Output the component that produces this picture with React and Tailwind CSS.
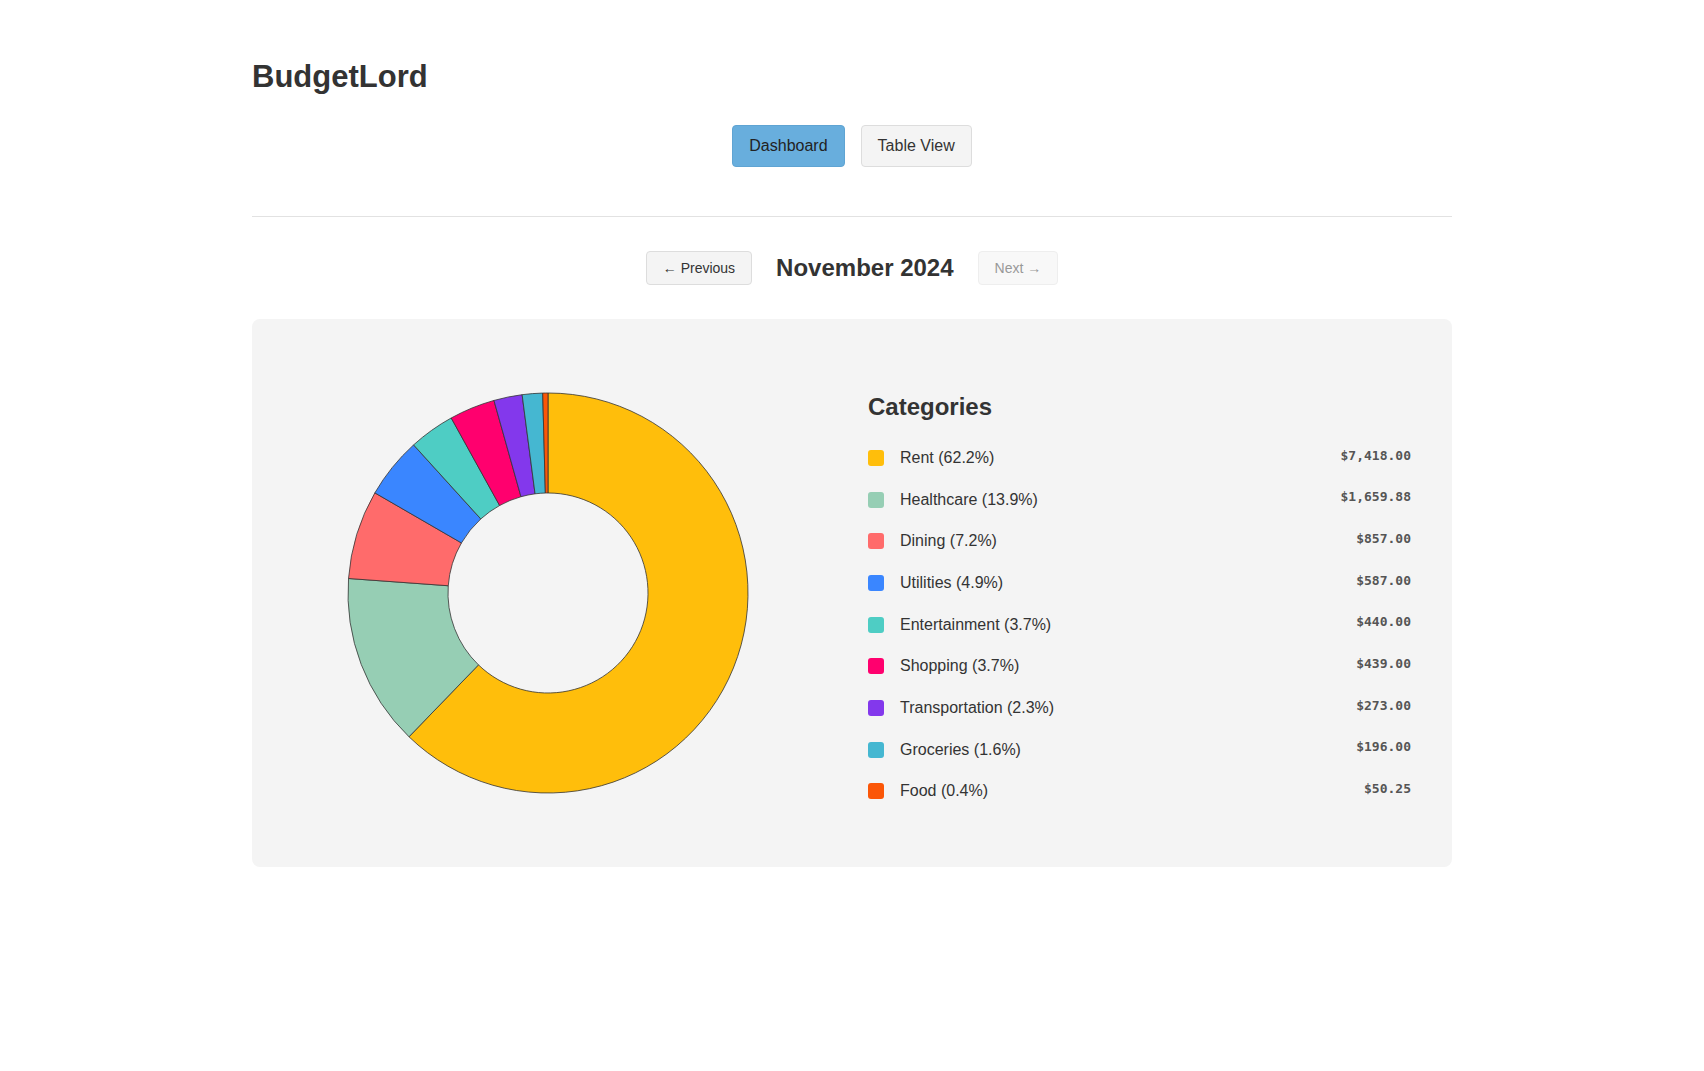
import React, { useState } from "react";

const MONTH_LABEL = "November 2024";

const categories = [
  { name: "Rent", amount: 7418.0, color: "#FFBE0B" },
  { name: "Healthcare", amount: 1659.88, color: "#96CEB4" },
  { name: "Dining", amount: 857.0, color: "#FF6B6B" },
  { name: "Utilities", amount: 587.0, color: "#3A86FF" },
  { name: "Entertainment", amount: 440.0, color: "#4ECDC4" },
  { name: "Shopping", amount: 439.0, color: "#FF006E" },
  { name: "Transportation", amount: 273.0, color: "#8338EC" },
  { name: "Groceries", amount: 196.0, color: "#45B7D1" },
  { name: "Food", amount: 50.25, color: "#FB5607" },
];

const formatMoney = (n) =>
  "$" +
  n.toLocaleString("en-US", {
    minimumFractionDigits: 2,
    maximumFractionDigits: 2,
  });

// point on circle, angle measured clockwise from 12 o'clock
const polar = (cx, cy, r, angle) => [
  cx + r * Math.sin(angle),
  cy - r * Math.cos(angle),
];

function arcPath(cx, cy, outer, inner, start, end) {
  const large = end - start > Math.PI ? 1 : 0;
  const [x1, y1] = polar(cx, cy, outer, start);
  const [x2, y2] = polar(cx, cy, outer, end);
  const [x3, y3] = polar(cx, cy, inner, end);
  const [x4, y4] = polar(cx, cy, inner, start);
  return `M ${x1} ${y1} A ${outer} ${outer} 0 ${large} 1 ${x2} ${y2} L ${x3} ${y3} A ${inner} ${inner} 0 ${large} 0 ${x4} ${y4} Z`;
}

function DonutChart({ data, total }) {
  const cx = 264;
  const cy = 242;
  let angle = 0;

  return (
    <svg viewBox="0 0 552 484" className="w-full h-[484px]">
      {data.map((d) => {
        const sweep = (d.amount / total) * Math.PI * 2;
        const path = arcPath(cx, cy, 200, 100, angle, angle + sweep);
        angle += sweep;
        return (
          <path
            key={d.name}
            d={path}
            fill={d.color}
            stroke="#333"
            strokeWidth="0.8"
          />
        );
      })}
    </svg>
  );
}

export default function App() {
  const [view, setView] = useState("dashboard");
  const total = categories.reduce((sum, c) => sum + c.amount, 0);

  return (
    <div className="min-h-screen bg-white text-[#333] font-['Liberation_Sans',Arial,sans-serif]">
      <div className="max-w-[1200px] mx-auto pt-[58px] pb-10">
        <h1 className="text-[31px] leading-[37px] font-bold">BudgetLord</h1>

        {/* view switcher */}
        <div className="flex justify-center gap-4 mt-[30px]">
          <button
            onClick={() => setView("dashboard")}
            className={`px-4 py-2 text-base rounded border ${
              view === "dashboard"
                ? "bg-[#68aedd] border-[#5fa4d3] text-[#222]"
                : "bg-[#f4f4f4] border-[#dddddd] text-[#333]"
            }`}
          >
            Dashboard
          </button>
          <button
            onClick={() => setView("table")}
            className={`px-4 py-2 text-base rounded border ${
              view === "table"
                ? "bg-[#68aedd] border-[#5fa4d3] text-[#222]"
                : "bg-[#f4f4f4] border-[#dddddd] text-[#333]"
            }`}
          >
            Table View
          </button>
        </div>

        <hr className="mt-[49px] border-[#e2e2e2]" />

        {/* month navigation */}
        <div className="flex items-center justify-center gap-6 mt-[33px]">
          <button className="px-4 py-1.5 text-sm rounded border bg-[#f4f4f4] border-[#dddddd] text-[#333]">
            ← Previous
          </button>
          <h2 className="text-2xl leading-9 font-bold">{MONTH_LABEL}</h2>
          <button
            disabled
            className="px-4 py-1.5 text-sm rounded border bg-[#f8f8f8] border-[#eeeeee] text-[#999]"
          >
            Next →
          </button>
        </div>

        {/* chart card */}
        <div className="mt-[33px] bg-[#f4f4f4] rounded-lg p-8 grid grid-cols-2 gap-8">
          <DonutChart data={categories} total={total} />

          <div className="pt-[38px]">
            <h3 className="text-2xl leading-9 font-bold">Categories</h3>
            <ul className="mt-3">
              {categories.map((c) => (
                <li
                  key={c.name}
                  className="h-[41.7px] flex items-center justify-between pr-[9px]"
                >
                  <div className="flex items-center">
                    <span
                      className="w-4 h-4 rounded-[3px] mr-4"
                      style={{ backgroundColor: c.color }}
                    />
                    <span className="text-base">
                      {c.name} ({((c.amount / total) * 100).toFixed(1)}%)
                    </span>
                  </div>
                  <span className="mb-[5px] text-[13px] font-bold text-[#555] font-['DejaVu_Sans_Mono',monospace]">
                    {formatMoney(c.amount)}
                  </span>
                </li>
              ))}
            </ul>
          </div>
        </div>
      </div>
    </div>
  );
}
